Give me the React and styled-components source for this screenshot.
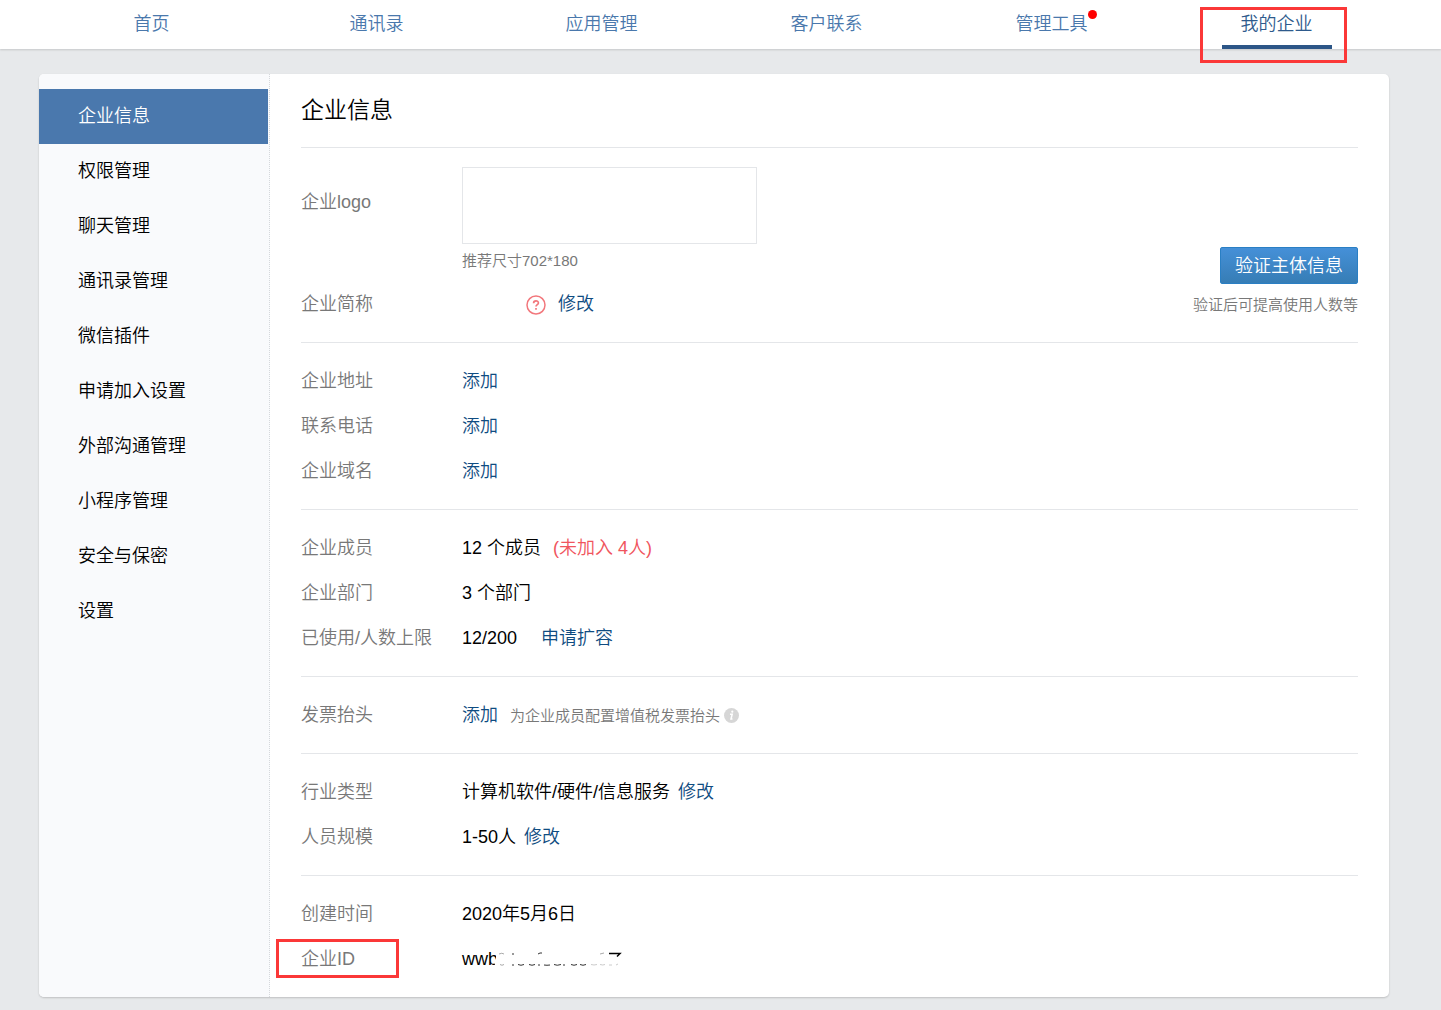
import React from 'react';
import styled, { createGlobalStyle } from 'styled-components';

const GlobalStyle = createGlobalStyle`
  *,
  *::before,
  *::after {
    box-sizing: border-box;
  }
  body {
    margin: 0;
    min-height: 100vh;
    background: #e7e9eb;
    color: #000;
    font-family: 'Liberation Sans', 'Noto Sans CJK SC', sans-serif;
    font-size: 18px;
    font-weight: 350;
  }
  a {
    color: #0f4c81;
    text-decoration: none;
  }
  a:hover {
    text-decoration: underline;
  }
`;

const Header = styled.header`
  padding: 0 52px 0 39px;
  background: #fff;
  box-shadow: 0 1px 2px rgba(0, 0, 0, 0.15);
`;

const Nav = styled.nav`
  display: grid;
  grid-template-columns: repeat(6, 1fr);
`;

const NavCell = styled.div`
  position: relative;
  display: flex;
  justify-content: center;
`;

const NavLink = styled.a`
  position: relative;
  height: 49px;
  padding: 0 19px;
  line-height: 48px;
  color: ${({ $active }) => ($active ? '#2e5a8c' : '#4a78ac')};
  border-bottom: 4px solid ${({ $active }) => ($active ? '#2c5687' : 'transparent')};
`;

const Dot = styled.span`
  position: absolute;
  top: 10px;
  right: 10px;
  width: 9px;
  height: 9px;
  border-radius: 50%;
  background: #f00;
`;

const Highlight = styled.span`
  position: absolute;
  top: ${({ $top }) => $top}px;
  left: ${({ $left }) => $left}px;
  width: ${({ $width }) => $width}px;
  height: ${({ $height }) => $height}px;
  border: 3px solid #fb3838;
  pointer-events: none;
`;

const Panel = styled.div`
  display: flex;
  margin: 25px 52px 13px 39px;
  border-radius: 5px;
  background: #fff;
  box-shadow: 0 1px 2px rgba(0, 0, 0, 0.18);
`;

const Sidebar = styled.aside`
  flex: 0 0 231px;
  padding: 15px 1px 15px 0;
  border-right: 1px dotted #d5d8dc;
  border-radius: 5px 0 0 5px;
  background: #f9fafc;
`;

const SideLink = styled.a`
  display: block;
  padding-left: 39px;
  line-height: 55px;
  color: ${({ $active }) => ($active ? '#fff' : '#000')};
  background: ${({ $active }) => ($active ? '#4a78ad' : 'transparent')};
`;

const Content = styled.main`
  flex: 1;
  min-width: 0;
  padding: 0 31px;
`;

const Title = styled.h1`
  margin: 0;
  font-size: 23px;
  font-weight: 350;
  line-height: 73px;
  border-bottom: 1px solid #e4e6e9;
`;

const Section = styled.section`
  display: flex;
  justify-content: space-between;
  padding: 16px 0 15px;
  &:not(:last-child) {
    border-bottom: 1px solid #e4e6e9;
  }
`;

const Rows = styled.dl`
  margin: 0;
`;

const Row = styled.div`
  position: relative;
  display: flex;
  line-height: 45px;
`;

const LogoRow = styled(Row)`
  padding-top: 3px;
  dt {
    line-height: 70px;
  }
`;

const Label = styled.dt`
  flex: 0 0 161px;
  color: #787878;
`;

const Value = styled.dd`
  display: flex;
  align-items: center;
  gap: ${({ $gap = 12 }) => $gap}px;
  margin: 0;
`;

const LogoValue = styled.dd`
  margin: 0;
`;

const LogoBox = styled.div`
  width: 295px;
  height: 77px;
  border: 1px solid #e4e6e9;
`;

const Note = styled.p`
  margin: 0;
  font-size: 15px;
  line-height: 30px;
  color: #787878;
`;

const LogoNote = styled(Note)`
  margin: 2px 0 6px;
`;

const Pending = styled.span`
  color: #f0555d;
`;

const NameValue = styled(Value)`
  padding-left: 64px;
`;

const IconButton = styled.button`
  display: flex;
  padding: 0;
  border: 0;
  background: none;
`;

const Hint = styled.span`
  display: flex;
  align-items: center;
  gap: 4px;
`;

const Verify = styled.div`
  display: flex;
  flex-direction: column;
  align-items: flex-end;
  justify-content: flex-end;
  gap: 6px;
  padding-bottom: 7px;
`;

const VerifyButton = styled.button`
  height: 37px;
  padding: 0 14px 4px;
  border: 1px solid #2a7fc4;
  border-radius: 2px;
  background: linear-gradient(#4590d8, #367db5);
  color: #fff;
  font: inherit;
`;

const CorpId = styled.span`
  position: relative;
`;

const Smudge = styled.svg`
  position: absolute;
  top: 14px;
  left: 32px;
`;

const QuestionIcon = () => (
  <svg width="20" height="20" viewBox="0 0 20 20" fill="none" stroke="#f2777c">
    <circle cx="10" cy="10" r="9" strokeWidth="1.5" />
    <path d="M7.6 8.2c0-3 4.8-3 4.8-.3 0 1.7-2.4 1.7-2.4 3.7M10 13v1.8" strokeWidth="1.7" />
  </svg>
);

const InfoIcon = () => (
  <svg width="15" height="15" viewBox="0 0 15 15">
    <circle cx="7.5" cy="7.5" r="7.5" fill="#d6d6d6" />
    <path d="M6 6.3h2.2L7 11h1.5" fill="none" stroke="#fff" strokeWidth="1.5" />
    <circle cx="8.3" cy="3.7" r="1.1" fill="#fff" />
  </svg>
);

// erased part of the id, only the edges of the characters are left
const ErasedId = () => (
  <Smudge width="130" height="18" viewBox="0 0 130 18" fill="none" aria-hidden="true">
    <path d="M2 0h128v18H0l1-4-1-3 2-4z" fill="#fff" />
    <path
      d="M18 3h2M44 3l2-1h2M18 14h2M24 13.5q3 1.500 6 0M35 13.500q3 1.500 6 0M44 14h2M50 14q3 .5 6 0M60 13.500q3 1.500 7 0M69 14h2M77 13.500q3 1.500 6 0M86 13.500q3 1.500 6 0"
      stroke="#333"
    />
    <path d="M5 3q3-1.500 5 0M6 13.500q2 1.500 4 0M106 3l4-1" stroke="#aaa" />
    <path d="M97 13.500q3 1 6 0M106 13.500q3 1 5 0M115 14h3M122 14l2-1" stroke="#ccc" />
    <path d="M115 2.500h11l-3 3" stroke="#000" strokeWidth="1.500" />
  </Smudge>
);

const navItems = ['首页', '通讯录', '应用管理', '客户联系', '管理工具', '我的企业'];

const sideItems = [
  '企业信息',
  '权限管理',
  '聊天管理',
  '通讯录管理',
  '微信插件',
  '申请加入设置',
  '外部沟通管理',
  '小程序管理',
  '安全与保密',
  '设置',
];

const Field = ({ label, gap, children }) => (
  <Row>
    <Label>{label}</Label>
    <Value $gap={gap}>{children}</Value>
  </Row>
);

const TopNav = () => (
  <Header>
    <Nav>
      {navItems.map((item) => (
        <NavCell key={item}>
          <NavLink href="#" $active={item === '我的企业'}>
            {item}
            {item === '管理工具' && <Dot />}
          </NavLink>
          {item === '我的企业' && (
            <Highlight $top={7} $left={36} $width={147} $height={56} />
          )}
        </NavCell>
      ))}
    </Nav>
  </Header>
);

export default function App() {
  return (
    <>
      <GlobalStyle />
      <TopNav />
      <Panel>
        <Sidebar>
          {sideItems.map((item, i) => (
            <SideLink key={item} href="#" $active={i === 0}>
              {item}
            </SideLink>
          ))}
        </Sidebar>
        <Content>
          <Title>企业信息</Title>
          <Section>
            <Rows>
              <LogoRow>
                <Label>企业logo</Label>
                <LogoValue>
                  <LogoBox />
                  <LogoNote>推荐尺寸702*180</LogoNote>
                </LogoValue>
              </LogoRow>
              <Row>
                <Label>企业简称</Label>
                <NameValue>
                  <IconButton type="button" aria-label="帮助">
                    <QuestionIcon />
                  </IconButton>
                  <a href="#">修改</a>
                </NameValue>
              </Row>
            </Rows>
            <Verify>
              <VerifyButton type="button">验证主体信息</VerifyButton>
              <Note>验证后可提高使用人数等</Note>
            </Verify>
          </Section>
          <Section>
            <Rows>
              <Field label="企业地址">
                <a href="#">添加</a>
              </Field>
              <Field label="联系电话">
                <a href="#">添加</a>
              </Field>
              <Field label="企业域名">
                <a href="#">添加</a>
              </Field>
            </Rows>
          </Section>
          <Section>
            <Rows>
              <Field label="企业成员">
                12 个成员 <Pending>(未加入 4人)</Pending>
              </Field>
              <Field label="企业部门">3 个部门</Field>
              <Field label="已使用/人数上限" gap={24}>
                12/200 <a href="#">申请扩容</a>
              </Field>
            </Rows>
          </Section>
          <Section>
            <Rows>
              <Field label="发票抬头">
                <a href="#">添加</a>
                <Hint>
                  <Note>为企业成员配置增值税发票抬头</Note>
                  <InfoIcon />
                </Hint>
              </Field>
            </Rows>
          </Section>
          <Section>
            <Rows>
              <Field label="行业类型" gap={8}>
                计算机软件/硬件/信息服务 <a href="#">修改</a>
              </Field>
              <Field label="人员规模" gap={8}>
                1-50人 <a href="#">修改</a>
              </Field>
            </Rows>
          </Section>
          <Section>
            <Rows>
              <Field label="创建时间">2020年5月6日</Field>
              <Row>
                <Label>企业ID</Label>
                <Value>
                  <CorpId>
                    wwb
                    <ErasedId />
                  </CorpId>
                </Value>
                <Highlight $top={2} $left={-25} $width={123} $height={39} />
              </Row>
            </Rows>
          </Section>
        </Content>
      </Panel>
    </>
  );
}
